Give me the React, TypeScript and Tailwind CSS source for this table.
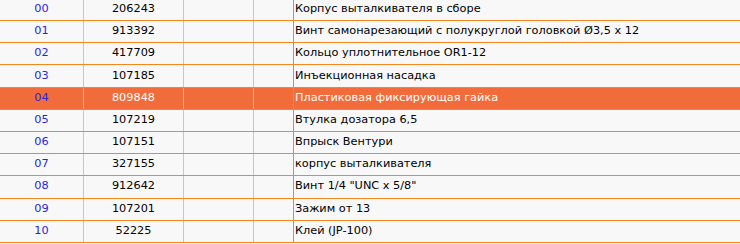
const ROWS = [
  { idx: "00", code: "206243", name: "Корпус выталкивателя в сборе" },
  { idx: "01", code: "913392", name: "Винт самонарезающий с полукруглой головкой Ø3,5 x 12" },
  { idx: "02", code: "417709", name: "Кольцо уплотнительное OR1-12" },
  { idx: "03", code: "107185", name: "Инъекционная насадка" },
  { idx: "04", code: "809848", name: "Пластиковая фиксирующая гайка" },
  { idx: "05", code: "107219", name: "Втулка дозатора 6,5" },
  { idx: "06", code: "107151", name: "Впрыск Вентури" },
  { idx: "07", code: "327155", name: "корпус выталкивателя" },
  { idx: "08", code: "912642", name: "Винт 1/4 \"UNC x 5/8\"" },
  { idx: "09", code: "107201", name: "Зажим от 13" },
  { idx: "10", code: "52225", name: "Клей (JP-100)" },
];

export default function App() {
  const selected = "04";
  return (
    <div
      className="w-[740px] h-[244px] overflow-hidden bg-[#f8f8f8] text-[11.3px]"
      style={{ fontFamily: "Tahoma, 'DejaVu Sans', sans-serif" }}
    >
      <div className="mt-[-1.2px]">
        {ROWS.map((r) => {
          const sel = r.idx === selected;
          return (
            <div
              key={r.idx}
              className={`flex h-[22.2px] border-b border-[#f7861e] ${
                sel ? "bg-[#f26c3b] text-white" : "text-black"
              }`}
            >
              <div className="w-[84px] flex items-center justify-center border-r border-[#c6c6c6] text-[#2a1fe0]">
                {r.idx}
              </div>
              <div className="w-[100px] flex items-center justify-center border-r border-[#c6c6c6]">
                {r.code}
              </div>
              <div className="w-[70px] border-r border-[#c6c6c6]" />
              <div className="w-[40px] border-r border-[#f7861e]" />
              <div className="flex-1 flex items-center pl-[1px] whitespace-nowrap">
                {r.name}
              </div>
            </div>
          );
        })}
      </div>
    </div>
  );
}
